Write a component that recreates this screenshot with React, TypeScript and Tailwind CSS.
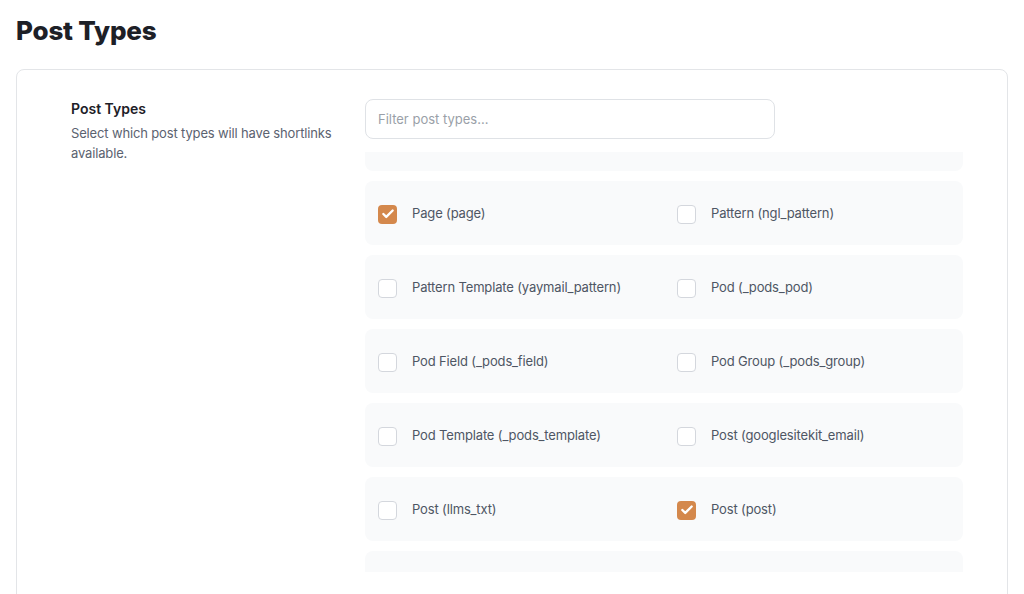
import { Check } from 'lucide-react';

const rows: Array<[string, boolean, string, boolean]> = [
  ['Page (page)', true, 'Pattern (ngl_pattern)', false],
  ['Pattern Template (yaymail_pattern)', false, 'Pod (_pods_pod)', false],
  ['Pod Field (_pods_field)', false, 'Pod Group (_pods_group)', false],
  ['Pod Template (_pods_template)', false, 'Post (googlesitekit_email)', false],
  ['Post (llms_txt)', false, 'Post (post)', true],
];

function Box({ checked }: { checked: boolean }) {
  if (checked) {
    return (
      <span className="flex h-[19px] w-[19px] shrink-0 items-center justify-center rounded-[4px] bg-[#d4884c]">
        <Check size={14} strokeWidth={4} className="text-white" />
      </span>
    );
  }
  return <span className="h-[19px] w-[19px] shrink-0 rounded-[4px] border border-[#d4d7dd] bg-white" />;
}

function Item({ label, checked }: { label: string; checked: boolean }) {
  return (
    <label className="flex items-center gap-[15px] px-[13px]">
      <Box checked={checked} />
      <span className="text-[13px] tracking-[-0.15px] text-[#4e5664]">{label}</span>
    </label>
  );
}

export default function App() {
  return (
    <div className="h-[594px] overflow-hidden bg-white px-4 pt-[14px] font-['Inter',sans-serif] text-[#1d2027]">
      <h1 className="text-[26px] font-extrabold leading-[34px] tracking-[-0.2px]">Post Types</h1>
      <div className="mt-[21px] h-[560px] rounded-lg border border-[#e3e5e8] pl-[54px] pt-[29px]">
        <div className="flex">
          <div className="w-[294px] shrink-0 pr-8">
            <h3 className="text-[14px] font-semibold leading-[20px]">Post Types</h3>
            <p className="mt-1 text-[13px] leading-[20px] tracking-[-0.15px] text-[#5b6270]">
              Select which post types will have shortlinks available.
            </p>
          </div>
          <div className="w-[598px]">
            <input
              placeholder="Filter post types..."
              className="h-10 w-[410px] rounded-lg border border-[#dfe2e6] px-3 text-[13px] text-[#4e5664] outline-none placeholder:text-[#9a9fa8]"
            />
            {/* list is scrolled: top and bottom rows are only partly visible */}
            <div className="mt-[13px] flex flex-col gap-[10px]">
              <div className="h-[19px] rounded-b-lg bg-[#f9fafb]" />
              {rows.map(([a, ac, b, bc], i) => (
                <div key={i} className="grid h-16 grid-cols-2 items-center rounded-lg bg-[#f9fafb] pt-[2px]">
                  <Item label={a} checked={ac} />
                  <Item label={b} checked={bc} />
                </div>
              ))}
              <div className="h-[21px] rounded-t-lg bg-[#f9fafb]" />
            </div>
          </div>
        </div>
      </div>
    </div>
  );
}
